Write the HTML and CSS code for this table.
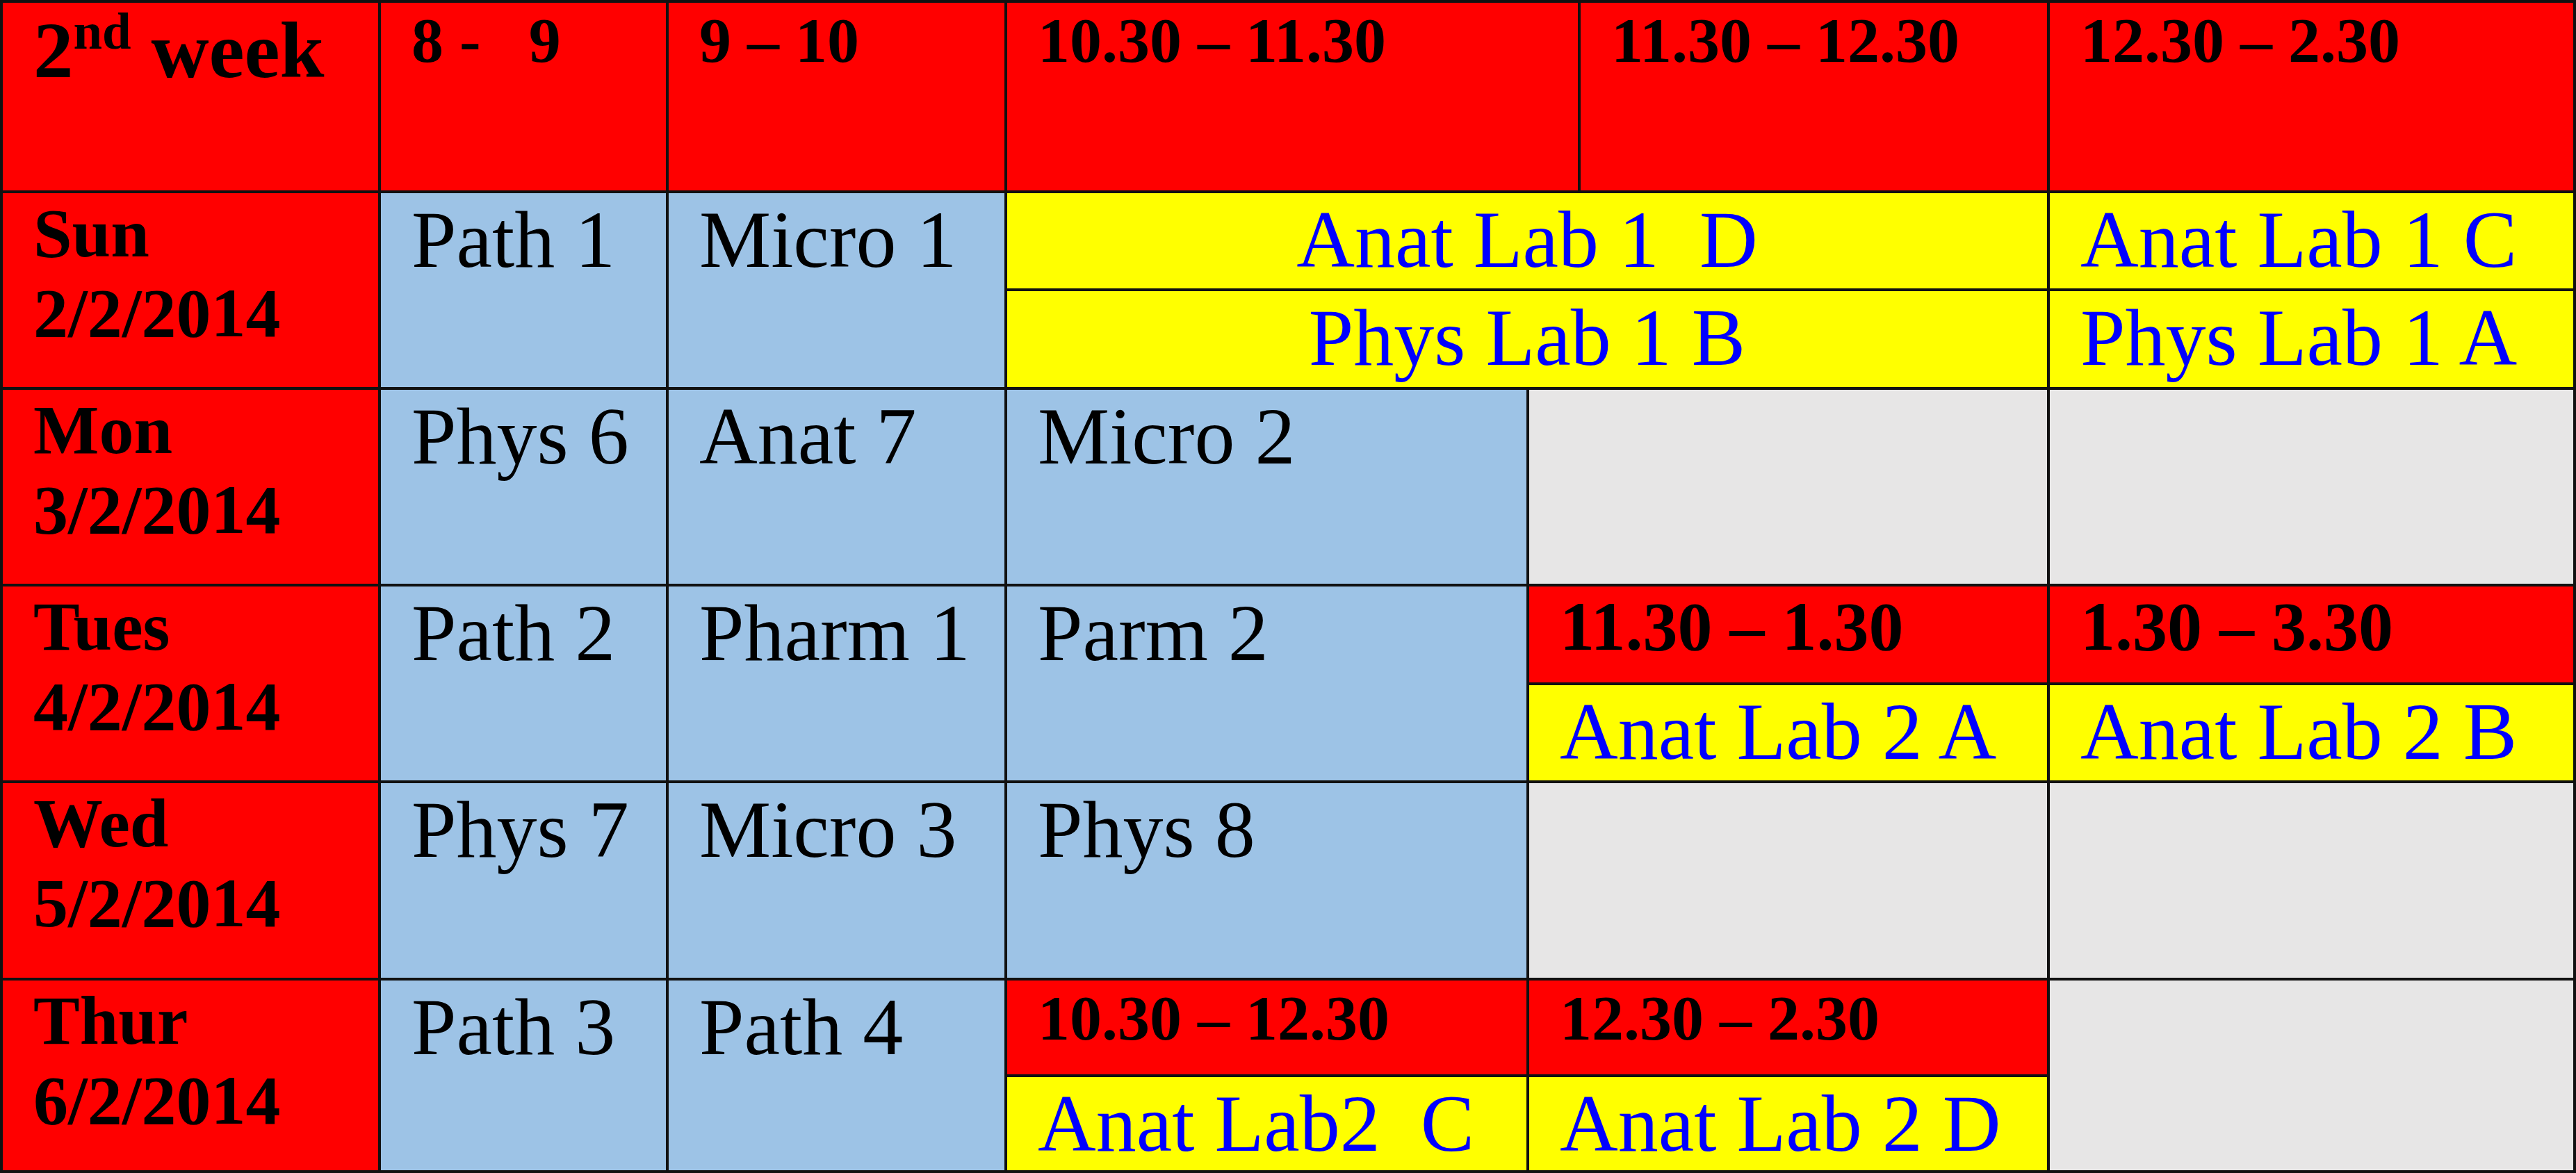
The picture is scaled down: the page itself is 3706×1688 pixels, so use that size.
FILE: index.html
```html
<!DOCTYPE html>
<html lang="en">
<head>
<meta charset="utf-8">
<title>2nd week timetable</title>
<link rel="stylesheet" href="styles.css">
</head>
<body>
<table class="timetable">
  <colgroup>
    <col class="c-day">
    <col class="c-1">
    <col class="c-2">
    <col class="c-3">
    <col class="c-4">
    <col class="c-5">
    <col class="c-6">
  </colgroup>
  <tr class="r-head">
    <th class="red week">2<sup>nd</sup> week</th>
    <th class="red time">8 -&nbsp;&nbsp;&nbsp;9</th>
    <th class="red time">9 – 10</th>
    <th class="red time" colspan="2">10.30 – 11.30</th>
    <th class="red time">11.30 – 12.30</th>
    <th class="red time">12.30 – 2.30</th>
  </tr>
  <tr class="r-sun-a">
    <th class="red day" rowspan="2">Sun<br>2/2/2014</th>
    <td class="blue" rowspan="2">Path 1</td>
    <td class="blue" rowspan="2">Micro 1</td>
    <td class="yellow lab center" colspan="3">Anat Lab 1&nbsp; D</td>
    <td class="yellow lab">Anat Lab 1 C</td>
  </tr>
  <tr class="r-sun-b">
    <td class="yellow lab center" colspan="3">Phys Lab 1 B</td>
    <td class="yellow lab">Phys Lab 1 A</td>
  </tr>
  <tr class="r-mon">
    <th class="red day">Mon<br>3/2/2014</th>
    <td class="blue">Phys 6</td>
    <td class="blue">Anat 7</td>
    <td class="blue">Micro 2</td>
    <td class="gray" colspan="2"></td>
    <td class="gray"></td>
  </tr>
  <tr class="r-tue-a">
    <th class="red day" rowspan="2">Tues<br>4/2/2014</th>
    <td class="blue" rowspan="2">Path 2</td>
    <td class="blue" rowspan="2">Pharm 1</td>
    <td class="blue" rowspan="2">Parm 2</td>
    <td class="red sub-lg" colspan="2">11.30 – 1.30</td>
    <td class="red sub-lg">1.30 – 3.30</td>
  </tr>
  <tr class="r-tue-b">
    <td class="yellow lab" colspan="2">Anat Lab 2 A</td>
    <td class="yellow lab">Anat Lab 2 B</td>
  </tr>
  <tr class="r-wed">
    <th class="red day">Wed<br>5/2/2014</th>
    <td class="blue">Phys 7</td>
    <td class="blue">Micro 3</td>
    <td class="blue">Phys 8</td>
    <td class="gray" colspan="2"></td>
    <td class="gray"></td>
  </tr>
  <tr class="r-thu-a">
    <th class="red day" rowspan="2">Thur<br>6/2/2014</th>
    <td class="blue" rowspan="2">Path 3</td>
    <td class="blue" rowspan="2">Path 4</td>
    <td class="red sub">10.30 – 12.30</td>
    <td class="red sub" colspan="2">12.30 – 2.30</td>
    <td class="gray" rowspan="2"></td>
  </tr>
  <tr class="r-thu-b">
    <td class="yellow lab">Anat Lab2&nbsp; C</td>
    <td class="yellow lab" colspan="2">Anat Lab 2 D</td>
  </tr>
</table>
</body>
</html>
```
FILE: styles.css
```css
html, body {
  margin: 0;
  padding: 0;
  background: #ffffff;
}

body {
  width: 3706px;
  height: 1688px;
  overflow: hidden;
}

.timetable {
  border-collapse: collapse;
  table-layout: fixed;
  width: 3706px;
  font-family: "Liberation Serif", "Times New Roman", serif;
  color: #000000;
}

.c-day { width: 544px; }
.c-1 { width: 414px; }
.c-2 { width: 487px; }
.c-3 { width: 751px; }
.c-4 { width: 74px; }
.c-5 { width: 675px; }
.c-6 { width: 757px; }

.timetable th,
.timetable td {
  border: 4px solid #111111;
  padding: 0 0 0 44px;
  vertical-align: top;
  text-align: left;
  white-space: nowrap;
  overflow: hidden;
  font-weight: normal;
  font-size: 116px;
  line-height: 134px;
}

.r-head { height: 274px; }
.r-sun-a { height: 141px; }
.r-sun-b { height: 142px; }
.r-mon { height: 283px; }
.r-tue-a { height: 142px; }
.r-tue-b { height: 141px; }
.r-wed { height: 284px; }
.r-thu-a { height: 139px; }
.r-thu-b { height: 138px; }

.timetable .red { background: #ff0000; }
.timetable .blue { background: #9dc3e6; }
.timetable .yellow { background: #ffff00; }
.timetable .gray { background: #e7e6e6; }

.timetable .lab { color: #0000ff; }
.timetable .center { text-align: center; padding-left: 0; }

.timetable .week {
  font-weight: bold;
  font-size: 115px;
  line-height: 138px;
}

.timetable .week sup {
  font-size: 0.65em;
  line-height: 0;
  vertical-align: 41px;
}

.timetable .time {
  font-weight: bold;
  font-size: 92px;
  line-height: 108px;
}

.timetable .day {
  font-weight: bold;
  font-size: 100px;
  line-height: 115px;
}

.timetable .sub-lg {
  font-weight: bold;
  font-size: 100px;
  line-height: 116px;
}

.timetable .sub {
  font-weight: bold;
  font-size: 92px;
  line-height: 108px;
}
```
